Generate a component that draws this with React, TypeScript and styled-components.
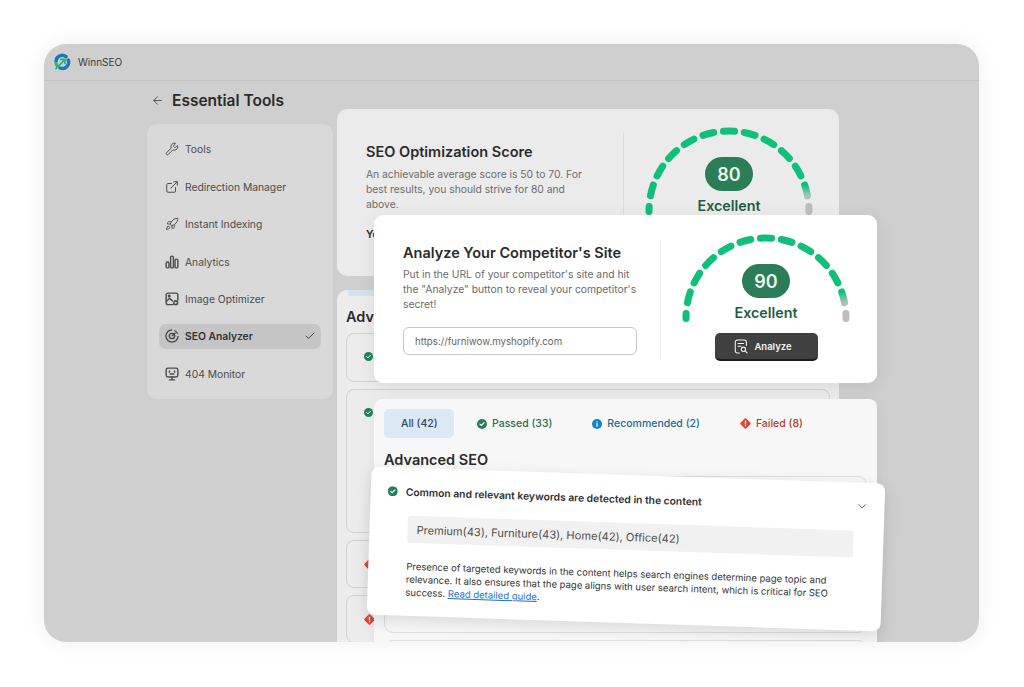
import styled, { createGlobalStyle } from "styled-components";
import { ArrowLeft, Check, ChevronDown, ExternalLink, Rocket, Wrench } from "lucide-react";
import type { ReactNode } from "react";

const GlobalStyle = createGlobalStyle`
  html, body {
    margin: 0;
    background: #fff;
  }
  * {
    box-sizing: border-box;
  }
  body {
    font-family: Inter, "Liberation Sans", sans-serif;
  }
`;

const Page = styled.div`
  width: 1024px;
  height: 687px;
  padding: 44px 45px 45px 44px;
  overflow: hidden;
`;

const Window = styled.div`
  position: relative;
  height: 598px;
  border-radius: 22px;
  background: #cfcfcf;
  overflow: hidden;
  box-shadow: 0 0 22px rgba(0, 0, 0, 0.07);
`;

const TopBar = styled.header`
  height: 37px;
  display: flex;
  align-items: center;
  gap: 7px;
  padding-left: 9px;
  border-bottom: 1px solid #c4c4c4;
`;

const Brand = styled.span`
  font-size: 10px;
  color: #3a3a3a;
`;

const Body = styled.div`
  display: grid;
  grid-template-columns: 186px 502px;
  gap: 4px;
  padding-left: 103px;
`;

const LeftColumn = styled.div`
  display: flex;
  flex-direction: column;
`;

const BackRow = styled.div`
  height: 38px;
  margin-bottom: 5px;
  display: flex;
  align-items: center;
  gap: 8px;
  padding-left: 4px;
  color: #333;
`;

const PageTitle = styled.h1`
  margin: 0;
  font-size: 15.5px;
  font-weight: 600;
  color: #2b2b2b;
`;

const Sidebar = styled.nav`
  height: 275px;
  padding: 13px 12px;
  border-radius: 10px;
  background: #d9d9d9;
  display: flex;
  flex-direction: column;
  gap: 12.5px;
`;

const NavItem = styled.div<{ $active?: boolean }>`
  height: 25px;
  display: flex;
  align-items: center;
  gap: 6px;
  padding: 0 5px 0 6px;
  border-radius: 7px;
  font-size: 10.3px;
  color: ${(p) => (p.$active ? "#333" : "#4c4c4c")};
  font-weight: ${(p) => (p.$active ? 600 : 400)};
  background: ${(p) => (p.$active ? "#c5c5c5" : "transparent")};
  svg {
    flex: none;
  }
`;

const NavLabel = styled.span`
  flex: 1;
`;

const RightColumn = styled.main`
  display: flex;
  flex-direction: column;
  gap: 14px;
  padding-top: 28px;
`;

const ScoreCard = styled.section`
  height: 167px;
  border-radius: 10px;
  background: #ebebeb;
  display: flex;
  padding: 23px 0 0 29px;
`;

const ScoreText = styled.div`
  width: 258px;
  height: 130px;
  padding-top: 11px;
  padding-right: 30px;
  border-right: 1px solid #dcdcdc;
`;

const CardTitle = styled.h2`
  margin: 0 0 6px;
  font-size: 14.5px;
  line-height: 18px;
  font-weight: 600;
  color: #2b2b2b;
`;

const CardText = styled.p`
  margin: 0;
  font-size: 10.3px;
  line-height: 15px;
  color: #6b6b6b;
`;

const ScoreNote = styled.p`
  margin: 16px 0 0;
  font-size: 10.5px;
  font-weight: 600;
  color: #2b2b2b;
`;

const GaugeSlot = styled.div`
  margin: -5px 0 0 19px;
`;

const GaugeWrap = styled.div`
  position: relative;
  width: 172px;
  height: 90px;
  svg {
    display: block;
    overflow: visible;
  }
`;

const GaugeContent = styled.div`
  position: absolute;
  left: 0;
  right: 0;
  top: 30px;
  display: flex;
  flex-direction: column;
  align-items: center;
  gap: 6px;
`;

const ScoreBadge = styled.div`
  width: 48px;
  height: 34px;
  border-radius: 17px;
  background: #2a7d57;
  color: #e9f5ee;
  display: flex;
  align-items: center;
  justify-content: center;
  font-size: 18px;
  font-weight: 600;
`;

const ScoreLabel = styled.div`
  font-size: 14.3px;
  line-height: 18px;
  font-weight: 600;
  color: #1f5c44;
`;

const AdvancedCard = styled.section`
  height: 352px;
  border-radius: 10px 10px 0 0;
  background: #ececec;
  padding: 0 9px;
`;

const HiddenTab = styled.div`
  width: 36px;
  height: 6px;
  margin: 0 0 12px 2px;
  background: #d5e3ef;
`;

const SectionTitle = styled.h3`
  margin: 0 0 7px;
  font-size: 14.5px;
  line-height: 18px;
  font-weight: 600;
  color: #2b2b2b;
`;

const ResultList = styled.div`
  display: flex;
  flex-direction: column;
  gap: 7px;
`;

const ResultBox = styled.div<{ $h: number }>`
  height: ${(p) => p.$h}px;
  border: 1px solid #d2d2d2;
  border-radius: 8px;
  padding: 18px 0 0 17px;
  svg {
    display: block;
  }
`;

const AnalyzeCard = styled.section`
  position: absolute;
  left: 330px;
  top: 171px;
  width: 503px;
  height: 168px;
  border-radius: 9px;
  background: #fff;
  display: flex;
  padding: 0 0 0 29px;
  box-shadow: 0 4px 18px rgba(0, 0, 0, 0.08);
`;

const AnalyzeText = styled.div`
  width: 258px;
  margin-top: 25px;
  height: 120px;
  padding-right: 23px;
  border-right: 1px solid #efefef;
  padding-top: 4px;
`;

const AnalyzeTitle = styled(CardTitle)`
  margin-bottom: 5px;
`;

const UrlInput = styled.div`
  margin-top: 15px;
  height: 28px;
  width: 234px;
  border: 1px solid #c6c6c6;
  border-radius: 6px;
  padding-left: 11px;
  display: flex;
  align-items: center;
  font-size: 9.7px;
  color: #666;
`;

const AnalyzeSide = styled.div`
  margin: 19px 0 0 19px;
  display: flex;
  flex-direction: column;
  align-items: center;
`;

const AnalyzeButton = styled.div`
  margin-top: 9px;
  width: 103px;
  height: 28px;
  padding-right: 6px;
  border-radius: 5px;
  background: #404040;
  border-bottom: 2px solid #1c1c1c;
  color: #f2f2f2;
  font-size: 9.5px;
  font-weight: 600;
  display: flex;
  align-items: center;
  justify-content: center;
  gap: 5px;
`;

const TabsCard = styled.section`
  position: absolute;
  left: 330px;
  top: 355px;
  width: 503px;
  height: 260px;
  border-radius: 8px;
  background: #f7f7f7;
  padding: 10px;
  box-shadow: 0 3px 14px rgba(0, 0, 0, 0.05);
`;

const TabRow = styled.div`
  display: flex;
  align-items: center;
  height: 29px;
  margin-bottom: 13px;
`;

const Tab = styled.div<{ $color: string }>`
  height: 29px;
  padding: 0 20px;
  display: flex;
  align-items: center;
  gap: 5px;
  border-radius: 5px;
  font-size: 10.5px;
  font-weight: 500;
  color: ${(p) => p.$color};
`;

const ActiveTab = styled(Tab)`
  width: 70px;
  padding: 0 0 0 17px;
  margin-right: 3px;
  background: #dbe9f6;
`;

const TabsBox = styled.div<{ $h: number }>`
  height: ${(p) => p.$h}px;
  margin-bottom: 7px;
  border: 1px solid #dedede;
  border-radius: 9px;
`;

const KeywordCard = styled.section`
  position: absolute;
  left: 325px;
  top: 431px;
  width: 514px;
  height: 148px;
  border-radius: 8px;
  background: #fff;
  padding: 17px 16px 0 17px;
  transform: rotate(1.9deg);
  box-shadow: 0 5px 16px rgba(0, 0, 0, 0.12);
`;

const KeywordHead = styled.div`
  height: 13px;
  display: flex;
  align-items: center;
  gap: 8px;
  font-size: 10.3px;
  font-weight: 600;
  color: #2e2e2e;
`;

const HeadLabel = styled.span`
  flex: 1;
`;

const Chevron = styled(ChevronDown)`
  color: #444;
`;

const KeywordBar = styled.div`
  margin: 18px 14px 0 21px;
  height: 27px;
  border-radius: 3px;
  background: #f1f1f1;
  padding-left: 9px;
  display: flex;
  align-items: center;
  font-size: 11.1px;
  color: #4e4e4e;
`;

const KeywordText = styled.p`
  margin: 17px 0 0 21px;
  font-size: 9.5px;
  line-height: 13px;
  color: #333;
`;

const GuideLink = styled.a`
  color: #1f6fc4;
  text-decoration: underline;
`;

function Logo() {
  return (
    <svg width="18" height="18" viewBox="0 0 18 18" fill="none">
      <path d="M3 8.5A6.2 6.2 0 0 1 13 3.6" stroke="#1877bd" strokeWidth="3.4" strokeLinecap="round" />
      <path d="M15.2 7A6.2 6.2 0 0 1 7 15" stroke="#1877bd" strokeWidth="3.4" strokeLinecap="round" />
      <path d="M3 10.5A6.2 6.2 0 0 0 4.5 13" stroke="#2bb673" strokeWidth="3" strokeLinecap="round" />
      <path d="M3 15.6 11.6 6.8M7.8 6.4h4.2v4.2" stroke="#22b573" strokeWidth="1.7" strokeLinecap="round" strokeLinejoin="round" />
    </svg>
  );
}

function StatusOk({ size = 10 }: { size?: number }) {
  return (
    <svg width={size} height={size} viewBox="0 0 10 10">
      <circle cx="5" cy="5" r="5" fill="#23805a" />
      <path d="M2.9 5.1 4.4 6.5 7.1 3.7" fill="none" stroke="#fff" strokeWidth="1.1" strokeLinecap="round" strokeLinejoin="round" />
    </svg>
  );
}

function StatusInfo() {
  return (
    <svg width="10" height="10" viewBox="0 0 10 10">
      <circle cx="5" cy="5" r="5" fill="#1283c4" />
      <path d="M5 4.6V7.2" stroke="#fff" strokeWidth="1.2" strokeLinecap="round" />
      <circle cx="5" cy="2.9" r=".7" fill="#fff" />
    </svg>
  );
}

function StatusFail() {
  return (
    <svg width="11" height="11" viewBox="0 0 10 10">
      <rect x="1.3" y="1.3" width="7.4" height="7.4" rx="1.3" fill="#dc4a36" transform="rotate(45 5 5)" />
      <path d="M5 2.9V5.4" stroke="#fff" strokeWidth="1.1" strokeLinecap="round" />
      <circle cx="5" cy="7" r=".6" fill="#fff" />
    </svg>
  );
}

function BarsIcon() {
  return (
    <svg width="14" height="14" viewBox="0 0 12 12" fill="none" stroke="#4c4c4c" strokeWidth="1.2">
      <rect x="1" y="6" width="2.4" height="5" rx="1" />
      <rect x="4.8" y="1" width="2.4" height="10" rx="1" />
      <rect x="8.6" y="3.5" width="2.4" height="7.5" rx="1" />
    </svg>
  );
}

function ImageIcon() {
  return (
    <svg width="14" height="14" viewBox="0 0 12 12" fill="none" stroke="#4c4c4c" strokeWidth="1.2" strokeLinecap="round">
      <path d="M7 10.8H2.6A1.6 1.6 0 0 1 1 9.2V2.6A1.6 1.6 0 0 1 2.6 1h6.8A1.6 1.6 0 0 1 11 2.6V7" />
      <path d="M1.2 8 4 5.6 6.4 7.6" />
      <circle cx="3.6" cy="3.5" r=".7" />
      <circle cx="9.2" cy="9.2" r="1.6" strokeWidth="1.3" />
    </svg>
  );
}

function TargetIcon() {
  return (
    <svg width="14" height="14" viewBox="0 0 12 12" fill="none" stroke="#444" strokeWidth="1.1">
      <path d="M6 .8A5.2 5.2 0 1 0 11.2 6" />
      <path d="M8 1.3A5.2 5.2 0 0 1 10.8 4" />
      <circle cx="6" cy="6" r="2.3" />
      <path d="M6 6 9 3.2" />
    </svg>
  );
}

function MonitorFaceIcon() {
  return (
    <svg width="14" height="14" viewBox="0 0 12 12" fill="none" stroke="#4c4c4c" strokeWidth="1.2" strokeLinecap="round">
      <rect x="1" y="1" width="10" height="7.6" rx="1.5" />
      <path d="M3.8 3.4v1M8.2 3.4v1M4.4 6h3.2M6 8.6v2M3.8 11h4.4" />
    </svg>
  );
}

function ReportIcon() {
  return (
    <svg width="15" height="15" viewBox="0 0 14 14" fill="none" stroke="#f2f2f2" strokeWidth="1" strokeLinecap="round">
      <path d="M5 13H3.2A2 2 0 0 1 1.2 11V3A2 2 0 0 1 3.2 1h6.4a2 2 0 0 1 2 2v3" />
      <path d="M3.8 4.2h5.2M3.8 6.8h2.6" />
      <circle cx="8.8" cy="9.6" r="2" />
      <path d="M10.3 11.1 12.2 13" />
    </svg>
  );
}

type GaugeProps = { uid: string; score: number };

// 13 dashes on a half circle, the last two fade out to grey
function Gauge({ uid, score }: GaugeProps) {
  const cx = 86;
  const cy = 84;
  const r = 80;
  const point = (deg: number) => {
    const a = (deg * Math.PI) / 180;
    return `${cx + r * Math.cos(a)} ${cy - r * Math.sin(a)}`;
  };
  const dashes = Array.from({ length: 13 }, (_, i) => {
    const isEnd = i === 0 || i === 12;
    const mid = isEnd ? (i === 0 ? 178.5 : 1.5) : 180 - i * 15;
    const half = isEnd ? 1.8 : 4;
    return { i, d: `M${point(mid + half)} A${r} ${r} 0 0 1 ${point(mid - half)}` };
  });
  return (
    <GaugeWrap>
      <svg width="172" height="90" viewBox="0 0 172 90" fill="none">
        <defs>
          <linearGradient id={uid} x1="0" y1="0" x2="0" y2="1">
            <stop offset="0" stopColor="#10bf7c" />
            <stop offset="1" stopColor="#a9c4b8" />
          </linearGradient>
        </defs>
        {dashes.map(({ i, d }) => (
          <path
            key={i}
            d={d}
            strokeWidth="7"
            strokeLinecap="round"
            stroke={i === 12 ? "#bdbdbd" : i === 11 ? `url(#${uid})` : "#10bf7c"}
          />
        ))}
      </svg>
      <GaugeContent>
        <ScoreBadge>{score}</ScoreBadge>
        <ScoreLabel>Excellent</ScoreLabel>
      </GaugeContent>
    </GaugeWrap>
  );
}

const navItems: { label: string; icon: ReactNode; active?: boolean }[] = [
  { label: "Tools", icon: <Wrench size={14} strokeWidth={1.7} /> },
  { label: "Redirection Manager", icon: <ExternalLink size={14} strokeWidth={1.7} /> },
  { label: "Instant Indexing", icon: <Rocket size={14} strokeWidth={1.6} /> },
  { label: "Analytics", icon: <BarsIcon /> },
  { label: "Image Optimizer", icon: <ImageIcon /> },
  { label: "SEO Analyzer", icon: <TargetIcon />, active: true },
  { label: "404 Monitor", icon: <MonitorFaceIcon /> },
];

const results: { h: number; icon: ReactNode }[] = [
  { h: 49, icon: <StatusOk size={9} /> },
  { h: 144, icon: <StatusOk size={9} /> },
  { h: 48, icon: <StatusFail /> },
  { h: 48, icon: <StatusFail /> },
];

export default function App() {
  return (
    <Page>
      <GlobalStyle />
      <Window>
        <TopBar>
          <Logo />
          <Brand>WinnSEO</Brand>
        </TopBar>
        <Body>
          <LeftColumn>
            <BackRow>
              <ArrowLeft size={13} strokeWidth={1.4} />
              <PageTitle>Essential Tools</PageTitle>
            </BackRow>
            <Sidebar>
              {navItems.map((item) => (
                <NavItem key={item.label} $active={item.active}>
                  {item.icon}
                  <NavLabel>{item.label}</NavLabel>
                  {item.active && <Check size={12} strokeWidth={1.8} />}
                </NavItem>
              ))}
            </Sidebar>
          </LeftColumn>
          <RightColumn>
            <ScoreCard>
              <ScoreText>
                <CardTitle>SEO Optimization Score</CardTitle>
                <CardText>An achievable average score is 50 to 70. For best results, you should strive for 80 and above.</CardText>
                <ScoreNote>Your</ScoreNote>
              </ScoreText>
              <GaugeSlot>
                <Gauge uid="fade-back" score={80} />
              </GaugeSlot>
            </ScoreCard>
            <AdvancedCard>
              <HiddenTab />
              <SectionTitle>Advanced SEO</SectionTitle>
              <ResultList>
                {results.map((r, i) => (
                  <ResultBox key={i} $h={r.h}>
                    {r.icon}
                  </ResultBox>
                ))}
              </ResultList>
            </AdvancedCard>
          </RightColumn>
        </Body>

        <AnalyzeCard>
          <AnalyzeText>
            <AnalyzeTitle>Analyze Your Competitor's Site</AnalyzeTitle>
            <CardText>Put in the URL of your competitor's site and hit the "Analyze" button to reveal your competitor's secret!</CardText>
            <UrlInput>https://furniwow.myshopify.com</UrlInput>
          </AnalyzeText>
          <AnalyzeSide>
            <Gauge uid="fade-front" score={90} />
            <AnalyzeButton>
              <ReportIcon />
              Analyze
            </AnalyzeButton>
          </AnalyzeSide>
        </AnalyzeCard>

        <TabsCard>
          <TabRow>
            <ActiveTab $color="#33475b">All (42)</ActiveTab>
            <Tab $color="#2a6b4f"><StatusOk />Passed (33)</Tab>
            <Tab $color="#1d6a94"><StatusInfo />Recommended (2)</Tab>
            <Tab $color="#b8392a"><StatusFail />Failed (8)</Tab>
          </TabRow>
          <SectionTitle>Advanced SEO</SectionTitle>
          <TabsBox $h={157} />
          <TabsBox $h={60} />
        </TabsCard>

        <KeywordCard>
          <KeywordHead>
            <StatusOk />
            <HeadLabel>Common and relevant keywords are detected in the content</HeadLabel>
            <Chevron size={13} strokeWidth={1.5} />
          </KeywordHead>
          <KeywordBar>Premium(43), Furniture(43), Home(42), Office(42)</KeywordBar>
          <KeywordText>
            Presence of targeted keywords in the content helps search engines determine page topic and relevance. It also ensures that the page aligns with user search intent, which is critical for SEO success. <GuideLink href="#">Read detailed guide</GuideLink>.
          </KeywordText>
        </KeywordCard>
      </Window>
    </Page>
  );
}
